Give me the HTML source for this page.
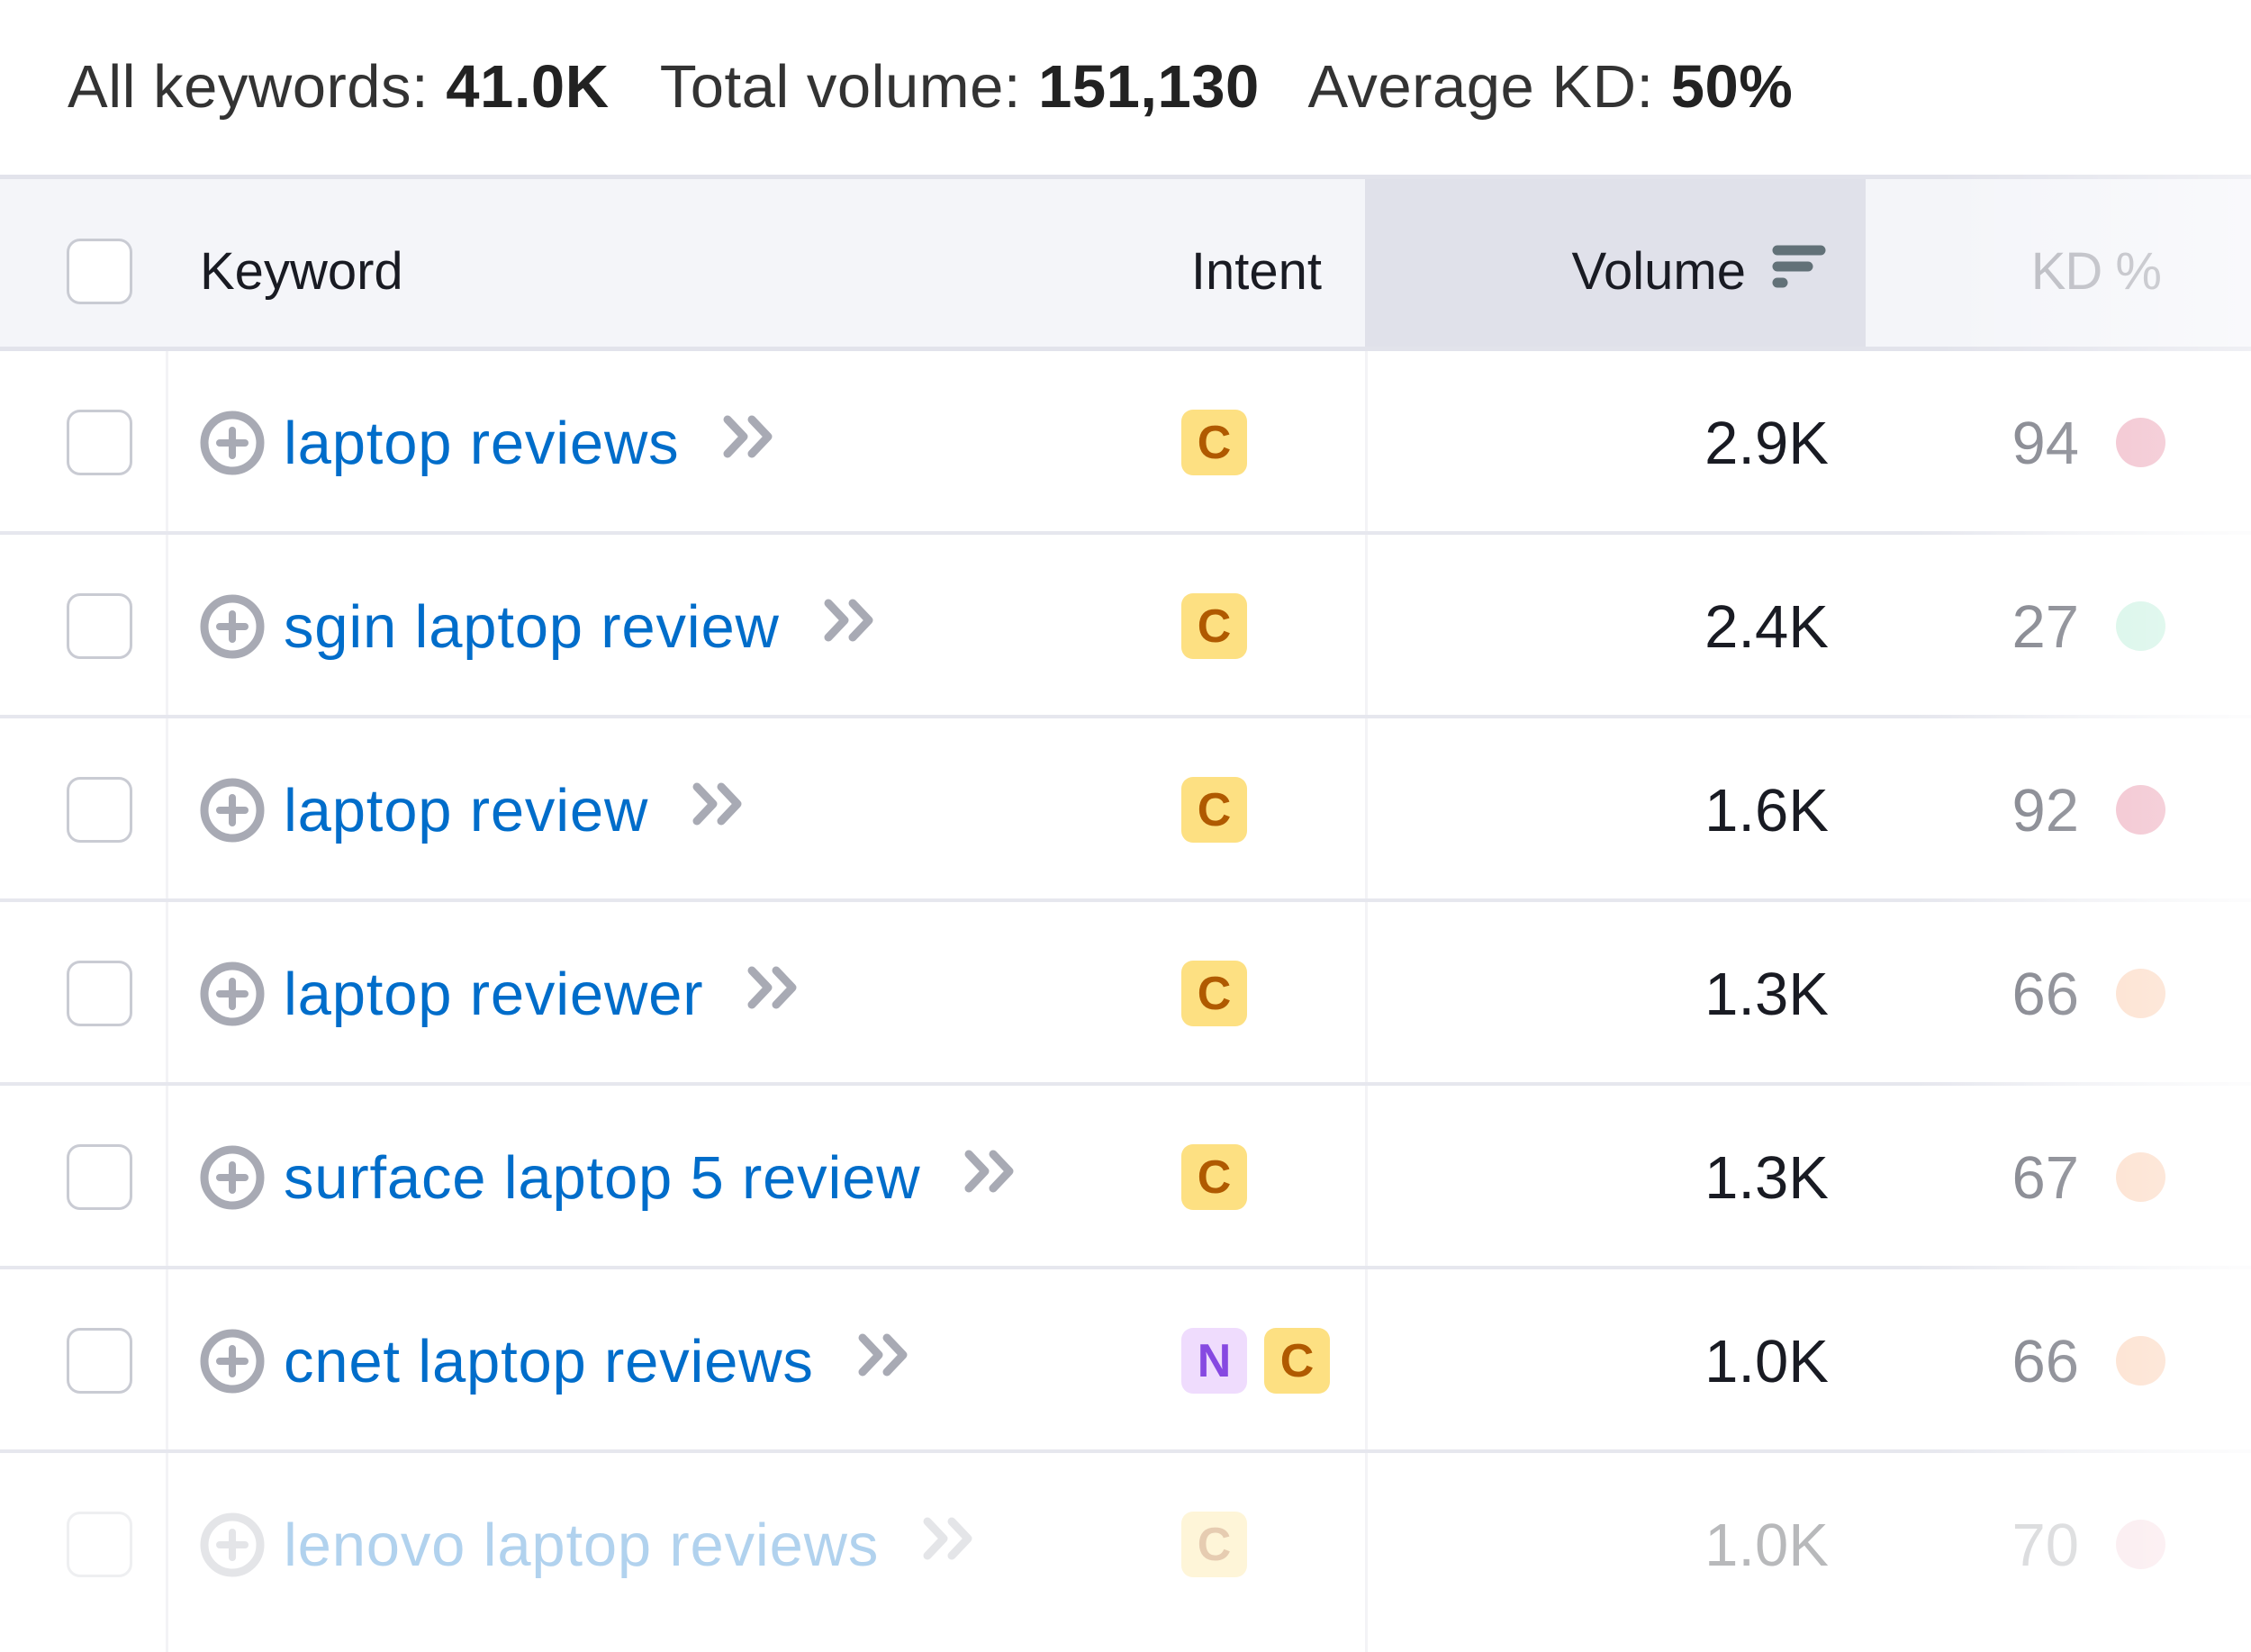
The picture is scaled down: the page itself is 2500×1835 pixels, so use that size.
<!DOCTYPE html>
<html><head><meta charset="utf-8">
<style>
*{margin:0;padding:0;box-sizing:border-box}
body{width:2500px;height:1835px;background:#fff;position:relative;overflow:hidden;font-family:"Liberation Sans",sans-serif;color:#191b23}
.abs{position:absolute}
.sum{left:75px;top:63px;font-size:67px;line-height:1;color:#333;white-space:nowrap;letter-spacing:0.5px}
.sum b{font-weight:700;color:#222}
.hdr{left:0;top:194px;width:2500px;height:196px;background:#f4f5f9;border-top:5px solid #e2e3eb;border-bottom:5px solid #e2e3eb}
.vol{left:1516px;top:199px;width:556px;height:186px;background:#e0e1ea}
.ht{font-size:58px;line-height:1;top:273px;color:#191b23}
.row{position:absolute;left:0;width:2500px;height:204px}
.row .line{position:absolute;left:0;bottom:0;width:2500px;height:4px;background:linear-gradient(to right,#e6e7ee 85%,rgba(230,231,238,0.2))}
.cb{position:absolute;left:74px;top:65px;width:73px;height:73px;border:3.5px solid #c9cbd3;border-radius:15px;background:#fff}
.kw{position:absolute;left:222px;top:62px;display:flex;align-items:center;height:80px}
.kw span{font-size:67px;line-height:1;color:#006dca;margin-left:21px;white-space:nowrap;letter-spacing:0.8px}
.kw svg.ch{margin-left:48px;margin-top:-14px}
.badge{position:absolute;top:65px;width:73px;height:73px;border-radius:13px;font-weight:700;font-size:52px;display:flex;align-items:center;justify-content:center;line-height:1}
.c{background:#fde082;color:#b05a00}
.n{background:#efdcfd;color:#8649e1}
.num{position:absolute;top:69px;font-size:67px;line-height:1;text-align:right}
.v{right:469px;color:#191b23}
.kd{right:191px;color:#7d7f88}
.dot{position:absolute;top:74px;left:2350px;width:55px;height:55px;border-radius:50%}
.sep{position:absolute;top:390px;width:3px;height:1445px;background:#f3f3f6}
.fade{position:absolute;left:2150px;top:190px;width:350px;height:1645px;background:linear-gradient(to right,rgba(255,255,255,0),rgba(255,255,255,0.45))}
</style></head><body>
<div class="abs sum">All keywords: <b>41.0K</b>&nbsp;&nbsp; Total volume: <b>151,130</b>&nbsp;&nbsp; Average KD: <b>50%</b></div>
<div class="abs hdr"></div>
<div class="abs vol"></div>
<div class="abs" style="left:74px;top:265px;width:73px;height:73px;border:3.5px solid #c9cbd3;border-radius:15px;background:#fff"></div>
<div class="abs ht" style="left:222px">Keyword</div>
<div class="abs ht" style="right:1032px">Intent</div>
<div class="abs ht" style="right:561px">Volume</div>
<svg class="abs" style="left:1968px;top:272px" width="60" height="48" viewBox="0 0 60 48"><g stroke="#627178" stroke-width="11" stroke-linecap="round"><line x1="6" y1="6" x2="54" y2="6"/><line x1="6" y1="24" x2="40" y2="24"/><line x1="6" y1="42" x2="12" y2="42"/></g></svg>
<div class="abs ht" style="right:100px;color:#b5b6bd;letter-spacing:-1px">KD %</div>
<div class="sep" style="left:184px"></div>
<div class="sep" style="left:1516px"></div>

<div class="row" style="top:390px;"><div class="line"></div>
<div class="cb"></div>
<div class="kw"><svg width="72" height="72" viewBox="0 0 72 72"><circle cx="36" cy="36" r="31" fill="none" stroke="#a8aab4" stroke-width="9"/><g stroke="#a8aab4" stroke-width="8" stroke-linecap="round"><line x1="36" y1="22" x2="36" y2="50"/><line x1="22" y1="36" x2="50" y2="36"/></g></svg><span>laptop reviews</span><svg class="ch" width="56" height="48" viewBox="0 0 56 48"><g fill="none" stroke="#a8aab4" stroke-width="9" stroke-linecap="round" stroke-linejoin="round"><polyline points="6,5 24,24 6,43"/><polyline points="33,5 51,24 33,43"/></g></svg></div>
<div class="badge c" style="left:1312px">C</div>
<div class="num v">2.9K</div><div class="num kd">94</div>
<div class="dot" style="background:#f0b9c7"></div></div>

<div class="row" style="top:594px;"><div class="line"></div>
<div class="cb"></div>
<div class="kw"><svg width="72" height="72" viewBox="0 0 72 72"><circle cx="36" cy="36" r="31" fill="none" stroke="#a8aab4" stroke-width="9"/><g stroke="#a8aab4" stroke-width="8" stroke-linecap="round"><line x1="36" y1="22" x2="36" y2="50"/><line x1="22" y1="36" x2="50" y2="36"/></g></svg><span>sgin laptop review</span><svg class="ch" width="56" height="48" viewBox="0 0 56 48"><g fill="none" stroke="#a8aab4" stroke-width="9" stroke-linecap="round" stroke-linejoin="round"><polyline points="6,5 24,24 6,43"/><polyline points="33,5 51,24 33,43"/></g></svg></div>
<div class="badge c" style="left:1312px">C</div>
<div class="num v">2.4K</div><div class="num kd">27</div>
<div class="dot" style="background:#d2f4e6"></div></div>

<div class="row" style="top:798px;"><div class="line"></div>
<div class="cb"></div>
<div class="kw"><svg width="72" height="72" viewBox="0 0 72 72"><circle cx="36" cy="36" r="31" fill="none" stroke="#a8aab4" stroke-width="9"/><g stroke="#a8aab4" stroke-width="8" stroke-linecap="round"><line x1="36" y1="22" x2="36" y2="50"/><line x1="22" y1="36" x2="50" y2="36"/></g></svg><span>laptop review</span><svg class="ch" width="56" height="48" viewBox="0 0 56 48"><g fill="none" stroke="#a8aab4" stroke-width="9" stroke-linecap="round" stroke-linejoin="round"><polyline points="6,5 24,24 6,43"/><polyline points="33,5 51,24 33,43"/></g></svg></div>
<div class="badge c" style="left:1312px">C</div>
<div class="num v">1.6K</div><div class="num kd">92</div>
<div class="dot" style="background:#f0b9c7"></div></div>

<div class="row" style="top:1002px;"><div class="line"></div>
<div class="cb"></div>
<div class="kw"><svg width="72" height="72" viewBox="0 0 72 72"><circle cx="36" cy="36" r="31" fill="none" stroke="#a8aab4" stroke-width="9"/><g stroke="#a8aab4" stroke-width="8" stroke-linecap="round"><line x1="36" y1="22" x2="36" y2="50"/><line x1="22" y1="36" x2="50" y2="36"/></g></svg><span>laptop reviewer</span><svg class="ch" width="56" height="48" viewBox="0 0 56 48"><g fill="none" stroke="#a8aab4" stroke-width="9" stroke-linecap="round" stroke-linejoin="round"><polyline points="6,5 24,24 6,43"/><polyline points="33,5 51,24 33,43"/></g></svg></div>
<div class="badge c" style="left:1312px">C</div>
<div class="num v">1.3K</div><div class="num kd">66</div>
<div class="dot" style="background:#fcdcc7"></div></div>

<div class="row" style="top:1206px;"><div class="line"></div>
<div class="cb"></div>
<div class="kw"><svg width="72" height="72" viewBox="0 0 72 72"><circle cx="36" cy="36" r="31" fill="none" stroke="#a8aab4" stroke-width="9"/><g stroke="#a8aab4" stroke-width="8" stroke-linecap="round"><line x1="36" y1="22" x2="36" y2="50"/><line x1="22" y1="36" x2="50" y2="36"/></g></svg><span>surface laptop 5 review</span><svg class="ch" width="56" height="48" viewBox="0 0 56 48"><g fill="none" stroke="#a8aab4" stroke-width="9" stroke-linecap="round" stroke-linejoin="round"><polyline points="6,5 24,24 6,43"/><polyline points="33,5 51,24 33,43"/></g></svg></div>
<div class="badge c" style="left:1312px">C</div>
<div class="num v">1.3K</div><div class="num kd">67</div>
<div class="dot" style="background:#fcdcc7"></div></div>

<div class="row" style="top:1410px;"><div class="line"></div>
<div class="cb"></div>
<div class="kw"><svg width="72" height="72" viewBox="0 0 72 72"><circle cx="36" cy="36" r="31" fill="none" stroke="#a8aab4" stroke-width="9"/><g stroke="#a8aab4" stroke-width="8" stroke-linecap="round"><line x1="36" y1="22" x2="36" y2="50"/><line x1="22" y1="36" x2="50" y2="36"/></g></svg><span>cnet laptop reviews</span><svg class="ch" width="56" height="48" viewBox="0 0 56 48"><g fill="none" stroke="#a8aab4" stroke-width="9" stroke-linecap="round" stroke-linejoin="round"><polyline points="6,5 24,24 6,43"/><polyline points="33,5 51,24 33,43"/></g></svg></div>
<div class="badge n" style="left:1312px">N</div>
<div class="badge c" style="left:1404px">C</div>
<div class="num v">1.0K</div><div class="num kd">66</div>
<div class="dot" style="background:#fcdcc7"></div></div>

<div class="row" style="top:1614px;opacity:0.3">
<div class="cb"></div>
<div class="kw"><svg width="72" height="72" viewBox="0 0 72 72"><circle cx="36" cy="36" r="31" fill="none" stroke="#a8aab4" stroke-width="9"/><g stroke="#a8aab4" stroke-width="8" stroke-linecap="round"><line x1="36" y1="22" x2="36" y2="50"/><line x1="22" y1="36" x2="50" y2="36"/></g></svg><span>lenovo laptop reviews</span><svg class="ch" width="56" height="48" viewBox="0 0 56 48"><g fill="none" stroke="#a8aab4" stroke-width="9" stroke-linecap="round" stroke-linejoin="round"><polyline points="6,5 24,24 6,43"/><polyline points="33,5 51,24 33,43"/></g></svg></div>
<div class="badge c" style="left:1312px">C</div>
<div class="num v">1.0K</div><div class="num kd">70</div>
<div class="dot" style="background:#f0b9c7"></div></div>

<div class="fade"></div>
</body></html>
